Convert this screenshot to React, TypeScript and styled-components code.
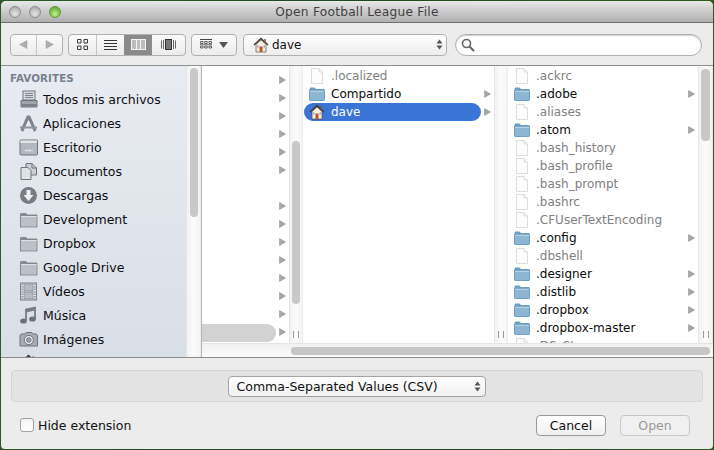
import styled, { createGlobalStyle } from "styled-components";
import type { ReactNode } from "react";

const GlobalStyle = createGlobalStyle`
  html, body {
    margin: 0;
    padding: 0;
    overflow: hidden;
    background: #1f4a22;
  }
  * { box-sizing: border-box; }
`;

const FONT = `"DejaVu Sans", "Noto Sans", sans-serif`;

const Desktop = styled.div`
  width: 714px;
  height: 450px;
  padding: 1px;
  background: linear-gradient(90deg, #2a5a2a 0%, #1c4a1f 50%, #2f5a1c 100%);
  font-family: ${FONT};
`;

const Win = styled.div`
  height: 448px;
  display: flex;
  flex-direction: column;
  background: #ececec;
  border-radius: 5px 5px 4px 4px;
  overflow: hidden;
`;

const TitleBar = styled.div`
  height: 22px;
  flex: none;
  position: relative;
  display: flex;
  align-items: center;
  justify-content: center;
  background: linear-gradient(#e9e9e9, #d0d0d0 40%, #b0b0b0);
  border-bottom: 1px solid #6f6f6f;
`;

const Lights = styled.div`
  position: absolute;
  left: 8px;
  top: 5px;
  display: flex;
  gap: 8px;
`;

const Light = styled.span<{ $on?: boolean }>`
  width: 12px;
  height: 12px;
  border-radius: 50%;
  border: 1px solid ${(p) => (p.$on ? "#5f9a3c" : "#8c8c8c")};
  background: ${(p) =>
    p.$on
      ? "radial-gradient(circle at 50% 70%, #c8f090 0%, #7fc04f 55%, #4d9030 100%)"
      : "radial-gradient(circle at 50% 70%, #e4e4e4 0%, #bdbdbd 60%, #9a9a9a 100%)"};
`;

const Title = styled.div`
  font-size: 12.2px;
  color: #3f3f3f;
  letter-spacing: 0.02em;
`;

const Toolbar = styled.div`
  height: 43px;
  flex: none;
  display: flex;
  align-items: center;
  padding: 1px 11px 0 9px;
  background: #ececec;
  border-bottom: 1px solid #8f8f8f;
`;

const Seg = styled.div<{ $w: number; $mr: number }>`
  width: ${(p) => p.$w}px;
  height: 22px;
  flex: none;
  margin-right: ${(p) => p.$mr}px;
  display: flex;
  border: 1px solid #b0b0b0;
  border-radius: 4px;
  background: linear-gradient(#fbfbfb, #ececec);
  overflow: hidden;
`;

const SegBtn = styled.div<{ $w?: number; $on?: boolean; $sep?: boolean }>`
  flex: ${(p) => (p.$w ? `0 0 ${p.$w}px` : "1")};
  display: flex;
  align-items: center;
  justify-content: center;
  gap: 7px;
  background: ${(p) => (p.$on ? "#8a8a8a" : "transparent")};
  border-right: ${(p) => (p.$sep ? "1px solid #c4c4c4" : "none")};
`;

const PathPopup = styled.div`
  width: 204px;
  height: 22px;
  flex: none;
  margin-right: 8px;
  display: flex;
  align-items: center;
  padding: 0 3px 0 9px;
  gap: 3px;
  border: 1px solid #b0b0b0;
  border-radius: 4px;
  background: linear-gradient(#ffffff, #ededed);
  font-size: 12px;
  color: #111;
`;

const Grow = styled.span`
  flex: 1;
`;

const Search = styled.div`
  width: 247px;
  height: 22px;
  flex: none;
  display: flex;
  align-items: center;
  padding-left: 5px;
  border: 1px solid #b0b0b0;
  border-radius: 11px;
  background: #fff;
  box-shadow: inset 0 1px 1px #cfcfcf;
`;

const Browser = styled.div`
  flex: 1;
  min-height: 0;
  display: flex;
  border-bottom: 1px solid #8c8c8c;
`;

const Sidebar = styled.div`
  width: 201px;
  flex: none;
  display: flex;
  overflow: hidden;
  border-right: 1px solid #b5b5b5;
`;

const SideList = styled.div`
  flex: 1;
  padding-top: 6px;
  background: linear-gradient(#e8ebf1, #d9dfe7);
  overflow: hidden;
`;

const SideHead = styled.div`
  height: 14px;
  margin-bottom: 1px;
  padding-left: 9px;
  font-size: 10.3px;
  line-height: 13px;
  font-weight: 700;
  color: #77808f;
  letter-spacing: 0.01em;
`;

const SideItem = styled.div`
  height: 24px;
  display: flex;
  align-items: center;
  padding-left: 18px;
  gap: 5px;
  font-size: 12.5px;
  color: #0d0d12;
  flex: none;
`;

const SideIconBox = styled.span`
  width: 19px;
  height: 19px;
  flex: none;
  display: block;
`;

const Track = styled.div<{ $w?: number }>`
  width: ${(p) => p.$w ?? 14}px;
  flex: none;
  display: flex;
  flex-direction: column;
  align-items: center;
  position: relative;
  background: linear-gradient(90deg, #f2f2f2, #fbfbfb 50%, #f4f4f4);
  border-left: 1px solid #e6e6e6;
  border-right: 1px solid #ececec;
`;

const Thumb = styled.div<{ $top: number; $h: number; $w?: number }>`
  width: ${(p) => p.$w ?? 8}px;
  height: ${(p) => p.$h}px;
  margin-top: ${(p) => p.$top}px;
  border-radius: 4px;
  background: #c8c8c8;
`;

const Grip = styled.div`
  position: absolute;
  bottom: 5px;
  left: 50%;
  width: 6px;
  height: 7px;
  margin-left: -3px;
  border-left: 1px solid #9a9a9a;
  border-right: 1px solid #9a9a9a;
`;

const Main = styled.div`
  flex: 1;
  min-width: 0;
  display: flex;
  flex-direction: column;
`;

const Columns = styled.div`
  flex: 1;
  min-height: 0;
  display: flex;
`;

const Col = styled.div<{ $w: number; $top: number }>`
  width: ${(p) => p.$w}px;
  flex: none;
  padding-top: ${(p) => p.$top}px;
  background: #fff;
  overflow: hidden;
`;

const Row = styled.div`
  height: 18px;
  display: flex;
  align-items: center;
  padding-right: 3px;
`;

const ArrowRow = styled(Row)`
  justify-content: flex-end;
  padding-bottom: 3px;
`;

const RowBody = styled.div<{ $sel?: boolean; $dim?: boolean }>`
  flex: 1;
  min-width: 0;
  height: 18px;
  margin: 0 3px 0 1px;
  padding: 0 0 1px 5px;
  display: flex;
  align-items: center;
  gap: 6px;
  font-size: 12px;
  border-radius: ${(p) => (p.$sel ? "9px" : "0")};
  background: ${(p) => (p.$sel ? "#3a74d6" : "transparent")};
  color: ${(p) => (p.$sel ? "#fff" : p.$dim ? "#808080" : "#0b0b0b")};
`;

const GhostRow = styled(Row)`
  position: relative;
  justify-content: flex-end;
  padding-bottom: 3px;
`;

const GhostFill = styled.div`
  position: absolute;
  left: 0;
  right: 13px;
  top: 0;
  bottom: 0;
  border-radius: 0 9px 9px 0;
  background: #d2d2d2;
`;

const HTrack = styled.div`
  height: 14px;
  flex: none;
  display: flex;
  align-items: center;
  background: linear-gradient(#f1f1f1, #fbfbfb);
  border-top: 1px solid #e4e4e4;
  padding-left: 89px;
`;

const HThumb = styled.div`
  width: 419px;
  height: 8px;
  border-radius: 4px;
  background: #c6c6c6;
`;

const Footer = styled.div`
  flex: none;
  height: 91px;
  padding: 12px 10px 0 10px;
  display: flex;
  flex-direction: column;
`;

const Accessory = styled.div`
  height: 32px;
  flex: none;
  display: flex;
  align-items: center;
  justify-content: center;
  background: #e3e3e3;
  border: 1px solid #d6d6d6;
  border-radius: 4px;
  padding-right: 1px;
`;

const FormatPopup = styled.div`
  width: 258px;
  height: 21px;
  display: flex;
  align-items: center;
  padding: 0 4px 0 8px;
  background: linear-gradient(#ffffff, #f0f0f0);
  border: 1px solid #a4a4a4;
  border-radius: 4px;
  font-size: 12.5px;
  color: #111;
`;

const Actions = styled.div`
  flex: 1;
  display: flex;
  align-items: center;
  padding: 0 13px 1px 9px;
`;

const Check = styled.span`
  width: 14px;
  height: 14px;
  flex: none;
  margin-right: 4px;
  border: 1px solid #a0a0a0;
  border-radius: 3px;
  background: linear-gradient(#f4f4f4, #ffffff);
`;

const CheckLabel = styled.span`
  font-size: 12.5px;
  color: #111;
  flex: 1;
`;

const Btn = styled.div<{ $off?: boolean }>`
  width: 70px;
  height: 21px;
  flex: none;
  margin-left: 14px;
  display: flex;
  align-items: center;
  justify-content: center;
  font-size: 12.5px;
  color: ${(p) => (p.$off ? "#999" : "#111")};
  background: ${(p) => (p.$off ? "#f0f0f0" : "linear-gradient(#ffffff, #f0f0f0)")};
  border: 1px solid ${(p) => (p.$off ? "#c8c8c8" : "#9a9a9a")};
  border-radius: 4px;
`;

/* drawings */

const Svg = ({ w, h, children }: { w: number; h: number; children: ReactNode }) => (
  <svg width={w} height={h} viewBox={`0 0 ${w} ${h}`} style={{ display: "block", flex: "none" }}>
    {children}
  </svg>
);

const Arrow = () => (
  <Svg w={7} h={8}>
    <path d="M0.5 0.5L6.5 4L0.5 7.5Z" fill="#a6a6a6" stroke="#8f8f8f" strokeWidth={0.5} />
  </Svg>
);

const FileIcon = () => (
  <Svg w={16} h={16}>
    <path d="M2.5 0.5H10L13.5 4V15.5H2.5Z" fill="#fdfdfd" stroke="#dcdcdc" />
    <path d="M10 0.5V4H13.5" fill="#f2f2f2" stroke="#dcdcdc" />
  </Svg>
);

const BlueFolder = () => (
  <Svg w={16} h={16}>
    <path d="M0.5 3.5C0.5 2 1 1.5 2 1.5H5.5L7 3H15.5V14.5H0.5Z" fill="#6d9fc4" />
    <rect x={0.5} y={4} width={15} height={10.5} rx={1} fill="#8db6d4" stroke="#6f9fc2" />
    <rect x={1} y={5} width={14} height={1} fill="#b4d0e4" />
  </Svg>
);

const GreyFolder = () => (
  <Svg w={19} h={19}>
    <path d="M1 4.5C1 3.5 1.5 3 2.5 3H7L8.5 4.5H18V17H1Z" fill="#868b93" />
    <rect x={1.5} y={5.5} width={16.5} height={11.5} fill="#bcc1c9" stroke="#7d828a" strokeWidth={0.8} />
    <rect x={2} y={6} width={15.5} height={1} fill="#dde0e5" />
  </Svg>
);

const House = ({ size = 16 }: { size?: number }) => (
  <svg width={size} height={size} viewBox="0 0 16 16" style={{ display: "block", flex: "none" }}>
    <path d="M1 8L8 1.5L15 8" fill="none" stroke="#4a3a30" strokeWidth={1.6} />
    <path d="M12 2V5.5" stroke="#6a5a50" strokeWidth={1.4} />
    <path d="M3 7.5L8 3L13 7.5V15H3Z" fill="#f4efe6" stroke="#5a4a40" strokeWidth={0.7} />
    <rect x={6.5} y={9.5} width={3} height={5.5} fill="#c8541a" />
    <rect x={4} y={8.5} width={1.6} height={2} fill="#8fa8c0" />
    <rect x={10.4} y={8.5} width={1.6} height={2} fill="#8fa8c0" />
  </svg>
);

const AllFilesIcon = () => (
  <Svg w={19} h={19}>
    <rect x={4} y={1} width={12} height={9} fill="#d8dce2" stroke="#6f747c" />
    <path d="M6 3.5H14M6 5.5H14M6 7.5H14" stroke="#7d828a" />
    <path d="M2 10.5H18V17H2Z" fill="#a0a5ad" stroke="#6f747c" />
    <rect x={2.5} y={14} width={15} height={2.5} fill="#7d828a" />
  </Svg>
);

const AppsIcon = () => (
  <Svg w={19} h={19}>
    <path d="M8 1.5H11L17.5 16L15 18L9.5 6L4 18L1.5 16Z" fill="#7f848c" />
    <path d="M9.5 6L6.5 12.5H12.5Z" fill="#e6e9ee" />
    <path d="M1 13.5H18" stroke="#8f949c" strokeWidth={2} />
  </Svg>
);

const DesktopIcon = () => (
  <Svg w={19} h={19}>
    <rect x={1} y={2} width={17.5} height={15} rx={1} fill="#b3b8c0" stroke="#6f747c" />
    <rect x={1.5} y={2.5} width={16.5} height={2.5} fill="#e2e5ea" />
    <path d="M6 12.5H13.5" stroke="#f4f5f7" strokeWidth={1.4} strokeDasharray="1.4 0.8" />
  </Svg>
);

const DocsIcon = () => (
  <Svg w={19} h={19}>
    <path d="M7 1.5H13L17.5 6V13H7Z" fill="#ccd0d6" stroke="#6f747c" />
    <path d="M2 5.5H9L12 8.5V17.5H2Z" fill="#dfe2e7" stroke="#6f747c" />
    <path d="M13 1.5V6H17.5" fill="none" stroke="#6f747c" />
  </Svg>
);

const DownloadIcon = () => (
  <Svg w={19} h={19}>
    <circle cx={9.5} cy={9.5} r={8.5} fill="#777c85" />
    <path d="M7.5 4H11.5V9H14.5L9.5 15L4.5 9H7.5Z" fill="#eef0f3" />
  </Svg>
);

const FilmIcon = () => (
  <Svg w={19} h={19}>
    <rect x={1.5} y={1} width={16} height={17} fill="#e2e5ea" stroke="#7d828a" />
    <rect x={5} y={2} width={9} height={7} fill="#b6bbc3" stroke="#7d828a" strokeWidth={0.6} />
    <rect x={5} y={10} width={9} height={7} fill="#b6bbc3" stroke="#7d828a" strokeWidth={0.6} />
    <path d="M3.3 1.5V18M15.7 1.5V18" stroke="#9a9fa7" strokeWidth={2} strokeDasharray="1.5 1" />
  </Svg>
);

const MusicIcon = () => (
  <Svg w={19} h={19}>
    <path d="M7 14V3.5L16 1.5V12" fill="none" stroke="#777c85" strokeWidth={1.8} />
    <path d="M7 3.5L16 1.5V4.5L7 6.5Z" fill="#777c85" />
    <ellipse cx={4.5} cy={15} rx={3.4} ry={2.6} fill="#6d7179" />
    <ellipse cx={13.5} cy={13} rx={3.4} ry={2.6} fill="#6d7179" />
  </Svg>
);

const CameraIcon = () => (
  <Svg w={19} h={19}>
    <path d="M1 6C1 4.5 2 4 3 4H6L7 2.5H13L14 4H16.5C17.5 4 18.5 4.5 18.5 6V16H1Z" fill="#a7acb4" stroke="#6f747c" />
    <circle cx={9.8} cy={10} r={4.6} fill="#e6e8ec" stroke="#6f747c" />
    <circle cx={9.8} cy={10} r={2.4} fill="#9a9fa7" stroke="#6f747c" strokeWidth={0.7} />
  </Svg>
);

const GridIcon = () => (
  <Svg w={13} h={13}>
    <path d="M1.5 1.5H5V5H1.5ZM8 1.5H11.5V5H8ZM1.5 8H5V11.5H1.5ZM8 8H11.5V11.5H8Z" fill="none" stroke="#3a3a3a" />
  </Svg>
);

const ListIcon = () => (
  <Svg w={13} h={11}>
    <path d="M0 1.5H13M0 4.5H13M0 7.5H13M0 10.5H13" stroke="#333" />
  </Svg>
);

const ColumnsIcon = () => (
  <Svg w={15} h={11}>
    <rect x={0.5} y={0.5} width={14} height={10} fill="#8a8a8a" stroke="#f4f4f4" />
    <path d="M5.5 1V10M9.5 1V10" stroke="#f4f4f4" />
    <rect x={1} y={1} width={4} height={9} fill="#bdbdbd" />
    <rect x={6} y={1} width={3} height={9} fill="#bdbdbd" />
    <rect x={10} y={1} width={4} height={9} fill="#bdbdbd" />
  </Svg>
);

const CoverIcon = () => (
  <Svg w={15} h={11}>
    <path d="M0.5 1.5V9.5M2.5 1V10" stroke="#666" />
    <rect x={4.5} y={0.5} width={6} height={10} fill="#777" stroke="#333" />
    <path d="M12.5 1V10M14.5 1.5V9.5" stroke="#666" />
  </Svg>
);

const GroupIcon = () => (
  <Svg w={12} h={11}>
    <path d="M0 0.5H12" stroke="#444" />
    <path d="M0.5 2.5H3V4.5H0.5ZM4.7 2.5H7.2V4.5H4.7ZM9 2.5H11.5V4.5H9ZM0.5 7H3V9H0.5ZM4.7 7H7.2V9H4.7ZM9 7H11.5V9H9Z" fill="none" stroke="#444" strokeWidth={0.8} />
    <path d="M0 5.7H12" stroke="#777" />
  </Svg>
);

const Caret = () => (
  <Svg w={9} h={6}>
    <path d="M0 0H9L4.5 6Z" fill="#555" />
  </Svg>
);

const NavLeft = () => (
  <Svg w={9} h={9}>
    <path d="M8 0.5V8.5L0.5 4.5Z" fill="#aeaeae" stroke="#a0a0a0" strokeWidth={0.5} />
  </Svg>
);

const NavRight = () => (
  <Svg w={9} h={9}>
    <path d="M1 0.5V8.5L8.5 4.5Z" fill="#aeaeae" stroke="#a0a0a0" strokeWidth={0.5} />
  </Svg>
);

const Stepper = () => (
  <Svg w={7} h={11}>
    <path d="M3.5 0.5L6.5 4.5H0.5Z" fill="#555" />
    <path d="M3.5 10.5L6.5 6.5H0.5Z" fill="#555" />
  </Svg>
);

const Magnifier = () => (
  <Svg w={14} h={14}>
    <circle cx={5.5} cy={5.5} r={4} fill="#fff" stroke="#666" strokeWidth={1.6} />
    <path d="M8.5 8.5L13 13" stroke="#666" strokeWidth={2.2} />
  </Svg>
);

/* data */

const favorites: [string, ReactNode][] = [
  ["Todos mis archivos", <AllFilesIcon />],
  ["Aplicaciones", <AppsIcon />],
  ["Escritorio", <DesktopIcon />],
  ["Documentos", <DocsIcon />],
  ["Descargas", <DownloadIcon />],
  ["Development", <GreyFolder />],
  ["Dropbox", <GreyFolder />],
  ["Google Drive", <GreyFolder />],
  ["Vídeos", <FilmIcon />],
  ["Música", <MusicIcon />],
  ["Imágenes", <CameraIcon />],
  // only the roof of this one shows above the fold
  ["", <House size={19} />],
];

const homeFiles: [string, boolean][] = [
  [".ackrc", false],
  [".adobe", true],
  [".aliases", false],
  [".atom", true],
  [".bash_history", false],
  [".bash_profile", false],
  [".bash_prompt", false],
  [".bashrc", false],
  [".CFUserTextEncoding", false],
  [".config", true],
  [".dbshell", false],
  [".designer", true],
  [".distlib", true],
  [".dropbox", true],
  [".dropbox-master", true],
  [".DS_Store", false],
];

const rootArrows = [1, 1, 1, 1, 1, 1, 0, 1, 1, 1, 1, 1, 1, 1];

export default function App() {
  return (
    <Desktop>
      <GlobalStyle />
      <Win>
        <TitleBar>
          <Lights>
            <Light />
            <Light />
            <Light $on />
          </Lights>
          <Title>Open Football League File</Title>
        </TitleBar>

        <Toolbar>
          <Seg $w={53} $mr={5}>
            <SegBtn $sep><NavLeft /></SegBtn>
            <SegBtn><NavRight /></SegBtn>
          </Seg>
          <Seg $w={118} $mr={5}>
            <SegBtn $w={28} $sep><GridIcon /></SegBtn>
            <SegBtn $w={27}><ListIcon /></SegBtn>
            <SegBtn $w={28} $on><ColumnsIcon /></SegBtn>
            <SegBtn><CoverIcon /></SegBtn>
          </Seg>
          <Seg $w={46} $mr={6}>
            <SegBtn><GroupIcon /><Caret /></SegBtn>
          </Seg>
          <PathPopup>
            <House />
            <span>dave</span>
            <Grow />
            <Stepper />
          </PathPopup>
          <Search>
            <Magnifier />
          </Search>
        </Toolbar>

        <Browser>
          <Sidebar>
            <SideList>
              <SideHead>FAVORITES</SideHead>
              {favorites.map(([name, icon], i) => (
                <SideItem key={i}>
                  <SideIconBox>{icon}</SideIconBox>
                  {name}
                </SideItem>
              ))}
            </SideList>
            <Track $w={15}>
              <Thumb $top={2} $h={149} />
            </Track>
          </Sidebar>

          <Main>
            <Columns>
              <Col $w={87} $top={6}>
                {rootArrows.map((on, i) => (
                  <ArrowRow key={i}>{on ? <Arrow /> : null}</ArrowRow>
                ))}
                <GhostRow>
                  <GhostFill />
                  <Arrow />
                </GhostRow>
              </Col>
              <Track>
                <Thumb $top={75} $h={163} />
                <Grip />
              </Track>
              <Col $w={191} $top={1}>
                <Row>
                  <RowBody $dim><FileIcon />.localized</RowBody>
                </Row>
                <Row>
                  <RowBody><BlueFolder />Compartido</RowBody>
                  <Arrow />
                </Row>
                <Row>
                  <RowBody $sel><House />dave</RowBody>
                  <Arrow />
                </Row>
              </Col>
              <Track>
                <Grip />
              </Track>
              <Col $w={190} $top={1}>
                {homeFiles.map(([name, dir]) => (
                  <Row key={name}>
                    <RowBody $dim={!dir}>
                      {dir ? <BlueFolder /> : <FileIcon />}
                      {name}
                    </RowBody>
                    {dir ? <Arrow /> : null}
                  </Row>
                ))}
              </Col>
              <Track $w={15}>
                <Thumb $top={3} $h={72} $w={9} />
                <Grip />
              </Track>
            </Columns>
            <HTrack>
              <HThumb />
            </HTrack>
          </Main>
        </Browser>

        <Footer>
          <Accessory>
            <FormatPopup>
              <span>Comma-Separated Values (CSV)</span>
              <Grow />
              <Stepper />
            </FormatPopup>
          </Accessory>
          <Actions>
            <Check />
            <CheckLabel>Hide extension</CheckLabel>
            <Btn>Cancel</Btn>
            <Btn $off>Open</Btn>
          </Actions>
        </Footer>
      </Win>
    </Desktop>
  );
}
